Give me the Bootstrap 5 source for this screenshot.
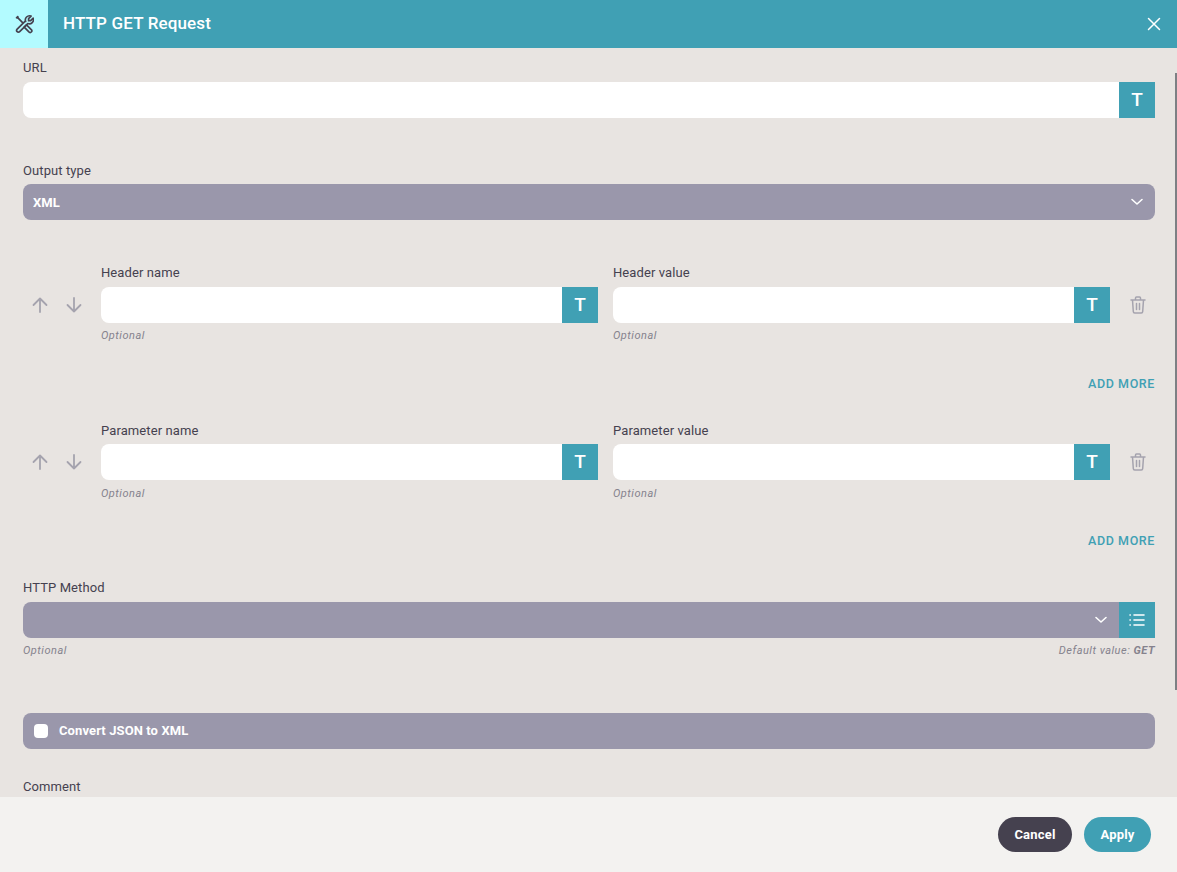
<!DOCTYPE html>
<html lang="en">
<head>
  <meta charset="UTF-8">
  <meta name="viewport" content="width=device-width, initial-scale=1.0">
  <title>HTTP GET Request</title>
  <link href="https://cdn.jsdelivr.net/npm/bootstrap@5.3.0/dist/css/bootstrap.min.css" rel="stylesheet">
  <style>
    html, body { height: 100%; overflow: hidden; }
    body { font-family: Roboto, "Liberation Sans", sans-serif; font-size: 13px; color: #45414f; background: #e8e4e1; }
    .dlg { height: 872px; }
    .dlg-head { height: 48px; background: #40a0b4; color: #fff; flex: none; }
    .dlg-logo { width: 48px; height: 48px; background: #b3fbff; color: #45414f; }
    .dlg-title { font-size: 17px; font-weight: 500; margin-left: 15px; letter-spacing: .15px; }
    .dlg-close { width: 16px; height: 16px; margin-right: 15px; }
    .dlg-body { flex: 1 1 auto; min-height: 0; overflow: hidden; padding: 12px 22px 0 23px; position: relative; }
    .dlg-scroll { position: absolute; right: 0; top: 25px; width: 2px; height: 617px; background: #7d8084; }
    .dlg-foot { height: 75px; flex: none; background: #f3f2f0; padding-right: 26px; gap: 12px; }
    .fld-label { display: block; font-size: 13px; line-height: 15px; margin-bottom: 7px; color: #45414f; letter-spacing: .1px; }
    .fld-label.tight { margin-bottom: 6px; }
    .fld-input.form-control { height: 36px; border: 0; border-radius: 8px 0 0 8px; background: #fff; box-shadow: none; }
    .type-btn { width: 36px; height: 36px; flex: none; background: #40a0b4; color: #fff; font-weight: 500; font-size: 19px; line-height: 36px; text-align: center; }
    .list-btn { width: 36px; height: 36px; flex: none; background: #40a0b4; color: #fff; }
    .fld-select.form-select { height: 36px; border: 0; border-radius: 8px; background-color: #9a97ab; color: #fff; font-size: 13px; font-weight: 700; padding: 1px 10px 0;
      background-image: url("data:image/svg+xml,%3csvg xmlns='http://www.w3.org/2000/svg' viewBox='0 0 16 16'%3e%3cpath fill='none' stroke='%23fff' stroke-width='1.6' stroke-linecap='round' stroke-linejoin='round' d='M3 5.500l5 4.500 5-4.500'/%3e%3c/svg%3e");
      background-size: 16px 16px; background-position: right 10px center; box-shadow: none; }
    .fld-select.joined { border-radius: 8px 0 0 8px; }
    .hint { font-size: 11px; font-style: italic; line-height: 12px; margin-top: 7px; color: #85828d; letter-spacing: .5px; }
    .hint.lower { margin-top: 8px; }
    .pair-col { flex: 1 1 0; min-width: 0; }
    .pair-gap { gap: 15px; }
    .row-tools { width: 78px; flex: none; height: 36px; margin-top: 22px; padding-left: 8px; gap: 16px; color: #a5a3ae; }
    .row-tools.lower, .row-del.lower { margin-top: 21px; }
    .row-del { width: 45px; flex: none; height: 36px; margin-top: 22px; color: #a5a3ae; padding-left: 20px; }
    .add-more { font-size: 12.5px; font-weight: 500; line-height: 14px; color: #40a0b4; letter-spacing: .6px; text-decoration: none; }
    .check-bar { height: 36px; border-radius: 8px; background: #9a97ab; color: #fff; font-size: 13px; font-weight: 700; letter-spacing: .1px; padding-left: 11px; }
    .check-box { width: 14px; height: 14px; border-radius: 4px; background: #fff; margin-right: 11px; }
    .foot-btn { height: 35px; border-radius: 18px; border: 0; color: #fff; font-size: 13px; font-weight: 700; letter-spacing: .2px; padding: 0; }
    .foot-cancel { width: 74px; background: #45414f; }
    .foot-apply { width: 67px; background: #40a0b4; }
    .foot-cancel:hover { background: #45414f; color: #fff; }
    .foot-apply:hover { background: #40a0b4; color: #fff; }
    .sp-45 { margin-top: 45px; }
    .sp-35 { margin-top: 35px; }
    .sp-34 { margin-top: 34px; }
    .sp-32 { margin-top: 32px; }
    .sp-56 { margin-top: 56px; }
    .sp-30 { margin-top: 30px; }
  </style>
</head>
<body>
  <div class="dlg d-flex flex-column">
    <div class="dlg-head d-flex align-items-center">
      <div class="dlg-logo d-flex align-items-center justify-content-center">
        <svg width="20" height="20" viewBox="0 0 24 24" fill="none" stroke="currentColor" stroke-width="2" stroke-linecap="round" stroke-linejoin="round">
          <path d="M13.500 8.500l-9.700 9.700a2 2 0 0 0 3 3l9.700-9.700a5 5 0 0 0 6.500-6.500l-3 3h-2.500v-2.500l3-3a5 5 0 0 0-6.500 6.500"/>
          <path d="M10 10L5 5 4.500 3 3 4.500 5 5"/>
          <path d="M14 14l1-1 6 6a2 2 0 0 1-2.800 2.800l-6-6z"/>
        </svg>
      </div>
      <div class="dlg-title flex-grow-1">HTTP GET Request</div>
      <svg class="dlg-close" viewBox="0 0 16 16" fill="none" stroke="#fff" stroke-width="1.5" stroke-linecap="round"><path d="M2.500 2.500l11 11M13.500 2.500l-11 11"/></svg>
    </div>

    <div class="dlg-body">
      <div class="dlg-scroll"></div>

      <label class="fld-label">URL</label>
      <div class="d-flex">
        <input type="text" class="form-control fld-input">
        <div class="type-btn">T</div>
      </div>

      <label class="fld-label tight sp-45">Output type</label>
      <select class="form-select fld-select"><option>XML</option></select>

      <div class="d-flex sp-45">
        <div class="row-tools d-flex align-items-center">
          <svg width="18" height="18" viewBox="0 0 18 18" fill="none" stroke="currentColor" stroke-width="1.8" stroke-linecap="round" stroke-linejoin="round"><path d="M9 16V2.500M2.500 9L9 2.500 15.500 9"/></svg>
          <svg width="18" height="18" viewBox="0 0 18 18" fill="none" stroke="currentColor" stroke-width="1.8" stroke-linecap="round" stroke-linejoin="round"><path d="M9 2v13.500M2.500 9L9 15.500 15.500 9"/></svg>
        </div>
        <div class="d-flex flex-grow-1 pair-gap">
          <div class="pair-col">
            <label class="fld-label">Header name</label>
            <div class="d-flex"><input type="text" class="form-control fld-input"><div class="type-btn">T</div></div>
            <div class="hint">Optional</div>
          </div>
          <div class="pair-col">
            <label class="fld-label">Header value</label>
            <div class="d-flex"><input type="text" class="form-control fld-input"><div class="type-btn">T</div></div>
            <div class="hint">Optional</div>
          </div>
        </div>
        <div class="row-del d-flex align-items-center">
          <svg width="16" height="18" viewBox="0 0 16 18" fill="none" stroke="currentColor" stroke-width="1.5" stroke-linecap="round" stroke-linejoin="round"><path d="M1 4h14M2.500 4l.8 11.500a1.500 1.500 0 0 0 1.500 1.500h6.400a1.500 1.500 0 0 0 1.500-1.500L13.500 4M5.500 4V2a1 1 0 0 1 1-1h3a1 1 0 0 1 1 1v2M6.500 7.500v6M9.500 7.500v6"/></svg>
        </div>
      </div>
      <div class="text-end sp-35"><a href="#" class="add-more d-block">ADD MORE</a></div>

      <div class="d-flex sp-32">
        <div class="row-tools lower d-flex align-items-center">
          <svg width="18" height="18" viewBox="0 0 18 18" fill="none" stroke="currentColor" stroke-width="1.8" stroke-linecap="round" stroke-linejoin="round"><path d="M9 16V2.500M2.500 9L9 2.500 15.500 9"/></svg>
          <svg width="18" height="18" viewBox="0 0 18 18" fill="none" stroke="currentColor" stroke-width="1.8" stroke-linecap="round" stroke-linejoin="round"><path d="M9 2v13.500M2.500 9L9 15.500 15.500 9"/></svg>
        </div>
        <div class="d-flex flex-grow-1 pair-gap">
          <div class="pair-col">
            <label class="fld-label tight">Parameter name</label>
            <div class="d-flex"><input type="text" class="form-control fld-input"><div class="type-btn">T</div></div>
            <div class="hint lower">Optional</div>
          </div>
          <div class="pair-col">
            <label class="fld-label tight">Parameter value</label>
            <div class="d-flex"><input type="text" class="form-control fld-input"><div class="type-btn">T</div></div>
            <div class="hint lower">Optional</div>
          </div>
        </div>
        <div class="row-del lower d-flex align-items-center">
          <svg width="16" height="18" viewBox="0 0 16 18" fill="none" stroke="currentColor" stroke-width="1.5" stroke-linecap="round" stroke-linejoin="round"><path d="M1 4h14M2.500 4l.8 11.500a1.500 1.500 0 0 0 1.500 1.500h6.400a1.500 1.500 0 0 0 1.500-1.500L13.500 4M5.500 4V2a1 1 0 0 1 1-1h3a1 1 0 0 1 1 1v2M6.500 7.500v6M9.500 7.500v6"/></svg>
        </div>
      </div>
      <div class="text-end sp-34"><a href="#" class="add-more d-block">ADD MORE</a></div>

      <label class="fld-label sp-32">HTTP Method</label>
      <div class="d-flex">
        <select class="form-select fld-select joined"><option></option></select>
        <div class="list-btn d-flex align-items-center justify-content-center">
          <svg width="16" height="14" viewBox="0 0 16 14" fill="none" stroke="currentColor" stroke-width="1.600" stroke-linecap="round"><path d="M5 2h10M5 7h10M5 12h10"/><path d="M1 2h.3M1 7h.3M1 12h.3"/></svg>
        </div>
      </div>
      <div class="hint d-flex justify-content-between">
        <span>Optional</span>
        <span>Default value: <b>GET</b></span>
      </div>

      <div class="check-bar d-flex align-items-center sp-56">
        <span class="check-box"></span>
        <span>Convert JSON to XML</span>
      </div>

      <label class="fld-label sp-30">Comment</label>
    </div>

    <div class="dlg-foot d-flex align-items-center justify-content-end">
      <button class="btn foot-btn foot-cancel">Cancel</button>
      <button class="btn foot-btn foot-apply">Apply</button>
    </div>
  </div>
  <script src="https://cdn.jsdelivr.net/npm/bootstrap@5.3.0/dist/js/bootstrap.bundle.min.js"></script>
</body>
</html>
